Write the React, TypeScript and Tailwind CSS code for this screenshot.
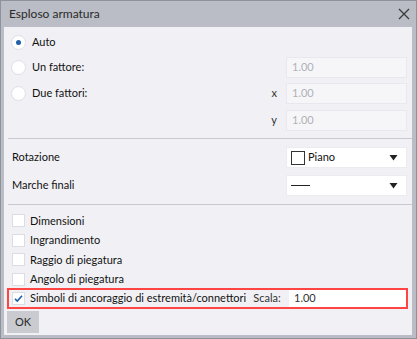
import React from 'react';

const font = { fontFamily: 'Lato, "Noto Sans", sans-serif' };

const Radio: React.FC<{ checked?: boolean; label: string }> = ({ checked, label }) => (
    <div className="flex items-center gap-[6px]">
        <div className="w-[15px] h-[15px] rounded-full bg-white border border-[#dedee5] flex items-center justify-center">
            {checked && <div className="w-[5px] h-[5px] rounded-full bg-[#1e5fa8]" />}
        </div>
        <span className="text-[11px] text-[#111] whitespace-nowrap">{label}</span>
    </div>
);

const Box: React.FC<{ checked?: boolean }> = ({ checked }) => (
    <div className="w-[13px] h-[13px] bg-white border border-[#dcdce3] flex items-center justify-center">
        {checked && (
            <svg width="11" height="11" viewBox="0 0 11 11">
                <path d="M2 5.8 L4.3 8 L9 2.8" fill="none" stroke="#1e5fa8" strokeWidth="1.6" />
            </svg>
        )}
    </div>
);

const Check: React.FC<{ label: string }> = ({ label }) => (
    <div className="flex items-center gap-[5px] h-[19.5px]">
        <Box />
        <span className="text-[11px] text-[#111] whitespace-nowrap">{label}</span>
    </div>
);

const DisabledInput: React.FC = () => (
    <div className="w-[121px] h-[21px] bg-[#f6f6f9] border border-[#e8e8ee] flex items-center px-[5px] text-[11px] text-[#b0b0b6]">
        1.00
    </div>
);

const Caret: React.FC = () => (
    <svg width="9" height="6" viewBox="0 0 9 6">
        <path d="M0.5 0 H8.5 L4.5 5.5 Z" fill="#222" />
    </svg>
);

export default function App() {
    return (
        <div className="w-[417px] h-[339px] bg-[#babdc5] border border-[#8e929b] flex flex-col" style={font}>
            {/* Title bar */}
            <div className="h-[26px] shrink-0 flex items-center justify-between pl-[8px] pr-[6px]">
                <span className="text-[12px] text-[#2a2a2a]">Esploso armatura</span>
                <svg width="12" height="12" viewBox="0 0 12 12">
                    <path d="M1 1 L11 11 M11 1 L1 11" stroke="#3a3a3a" strokeWidth="1.3" />
                </svg>
            </div>

            <div className="flex-1 flex pl-[3px] pr-[4px] pb-[3px]">
                <div className="flex-1 min-w-0 bg-[#f1f1f5] flex flex-col">
                    {/* Radio section */}
                    <div className="flex flex-col pt-[3px]">
                        <div className="h-[24px] flex items-center pl-[7px]">
                            <Radio checked label="Auto" />
                        </div>
                        <div className="h-[26px] flex items-center justify-between pl-[7px] pr-[5px]">
                            <Radio label="Un fattore:" />
                            <DisabledInput />
                        </div>
                        <div className="h-[27px] flex items-center justify-between pl-[7px] pr-[5px]">
                            <Radio label="Due fattori:" />
                            <div className="flex items-center gap-[9px]">
                                <span className="text-[11px] text-[#333]">x</span>
                                <DisabledInput />
                            </div>
                        </div>
                        <div className="h-[27px] flex items-center justify-end pr-[5px]">
                            <div className="flex items-center gap-[9px]">
                                <span className="text-[11px] text-[#333]">y</span>
                                <DisabledInput />
                            </div>
                        </div>
                    </div>

                    <div className="mt-[4px] ml-[4px] h-[1px] bg-[#c9c9cf]" />

                    {/* Dropdown section */}
                    <div className="flex flex-col pt-[8px] gap-[7px]">
                        <div className="h-[21px] flex items-center justify-between pl-[8px] pr-[5px]">
                            <span className="text-[11px] text-[#111]">Rotazione</span>
                            <div className="w-[121px] h-[21px] bg-white border border-[#ececf0] flex items-center justify-between pl-[4px] pr-[8px]">
                                <div className="flex items-center gap-[3px]">
                                    <div className="w-[14px] h-[14px] border border-[#333]" />
                                    <span className="text-[11px] text-[#111]">Piano</span>
                                </div>
                                <Caret />
                            </div>
                        </div>
                        <div className="h-[21px] flex items-center justify-between pl-[8px] pr-[5px]">
                            <span className="text-[11px] text-[#111]">Marche finali</span>
                            <div className="w-[121px] h-[21px] bg-white border border-[#ececf0] flex items-center justify-between pl-[4px] pr-[8px]">
                                <div className="w-[19px] h-[1.5px] bg-[#222]" />
                                <Caret />
                            </div>
                        </div>
                    </div>

                    <div className="mt-[8px] ml-[4px] h-[1px] bg-[#c9c9cf]" />

                    {/* Checkbox section */}
                    <div className="flex flex-col pt-[6px] pl-[8px]">
                        <Check label="Dimensioni" />
                        <Check label="Ingrandimento" />
                        <Check label="Raggio di piegatura" />
                        <Check label="Angolo di piegatura" />
                    </div>

                    <div className="mt-[-1px] ml-[3px] mr-[4px] h-[21px] border-2 border-[#ff4444] flex items-center pl-[3px]">
                        <div className="flex items-center gap-[5px]">
                            <Box checked />
                            <span className="text-[11px] text-[#111] whitespace-nowrap">Simboli di ancoraggio di estremità/connettori</span>
                        </div>
                        <span className="ml-[7px] text-[11px] text-[#333] whitespace-nowrap">Scala:</span>
                        <div className="ml-auto w-[117px] h-full bg-white flex items-center px-[5px] text-[11px] text-[#333]">
                            1.00
                        </div>
                    </div>

                    <div className="pl-[3px] pt-[2px]">
                        <div className="w-[32px] h-[22px] bg-[#c9cbd1] flex items-center justify-center text-[11px] text-[#2a2a2a]">
                            OK
                        </div>
                    </div>
                </div>
            </div>
        </div>
    );
}
